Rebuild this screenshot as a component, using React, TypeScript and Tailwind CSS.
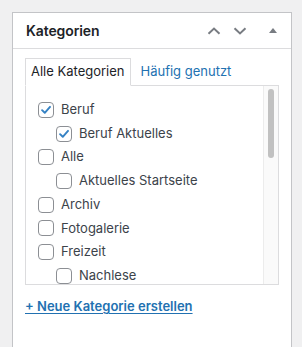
import React from "react"

const items: { label: string; level: number; checked: boolean }[] = [
  { label: "Beruf", level: 0, checked: true },
  { label: "Beruf Aktuelles", level: 1, checked: true },
  { label: "Alle", level: 0, checked: false },
  { label: "Aktuelles Startseite", level: 1, checked: false },
  { label: "Archiv", level: 0, checked: false },
  { label: "Fotogalerie", level: 0, checked: false },
  { label: "Freizeit", level: 0, checked: false },
  { label: "Nachlese", level: 1, checked: false },
]

function Checkbox({ checked }: { checked: boolean }) {
  return (
    <span className="flex h-4 w-4 shrink-0 items-center justify-center rounded-[4px] border border-[#8c8f94] bg-white">
      {checked && (
        <svg viewBox="0 0 16 16" className="h-[14px] w-[14px]">
          <path d="M3.5 8.2 L6.6 11.2 L12.6 4.4" fill="none" stroke="#3582c4" strokeWidth="2.2" strokeLinecap="round" strokeLinejoin="round" />
        </svg>
      )}
    </span>
  )
}

export default function App() {
  return (
    <div className="min-h-[347px] w-[302px] bg-[#f0f0f1] pl-3 pt-3 font-['Inter',sans-serif] text-[#1d2327]">
      <div className="w-[280px] border border-[#c3c4c7] bg-white">
        {/* header */}
        <div className="flex h-[36px] items-center border-b border-[#dcdcde] pl-[13px] pr-[13px]">
          <h2 className="flex-1 text-[14px] font-semibold tracking-[-0.1px]">Kategorien</h2>
          <svg viewBox="0 0 14 8" className="mr-[12px] h-[8px] w-[14px]">
            <path d="M1.5 6.8 L7 1.6 L12.5 6.8" fill="none" stroke="#787c82" strokeWidth="2" />
          </svg>
          <svg viewBox="0 0 14 8" className="mr-[22px] h-[8px] w-[14px]">
            <path d="M1.5 1.2 L7 6.4 L12.5 1.2" fill="none" stroke="#787c82" strokeWidth="2" />
          </svg>
          <svg viewBox="0 0 8 5" className="mr-[1px] h-[5px] w-[8px]">
            <path d="M0 5 L4 0 L8 5 Z" fill="#787c82" />
          </svg>
        </div>

        {/* content */}
        <div className="px-3 pt-[9px] pb-[30px]">
          <div className="flex items-end text-[13px]">
            <div className="relative z-10 -mb-px flex h-[28px] items-center border border-b-white border-[#dcdcde] bg-white px-[5px]">
              Alle Kategorien
            </div>
            <div className="flex h-[27px] items-center pl-[10px] text-[#2271b1]">Häufig genutzt</div>
          </div>
          <div className="flex h-[200px] border border-[#dcdcde]">
            <ul className="flex-1 overflow-hidden pl-3 pt-3">
              {items.map((it, i) => (
                <li
                  key={i}
                  className={`flex h-[23.7px] items-center gap-[7px] text-[13px] text-[#3c434a] ${it.level ? "pl-[18px]" : ""}`}
                >
                  <Checkbox checked={it.checked} />
                  <span>{it.label}</span>
                </li>
              ))}
            </ul>
            <div className="w-[15px] border-l border-[#ececec] bg-[#fafafa] pt-[3px]">
              <div className="mx-auto h-[69px] w-[6px] rounded-full bg-[#c1c1c1]" />
            </div>
          </div>
          <a className="mt-[12px] block text-[13px] font-semibold text-[#2271b1] underline underline-offset-2">
            + Neue Kategorie erstellen
          </a>
        </div>
      </div>
    </div>
  )
}
